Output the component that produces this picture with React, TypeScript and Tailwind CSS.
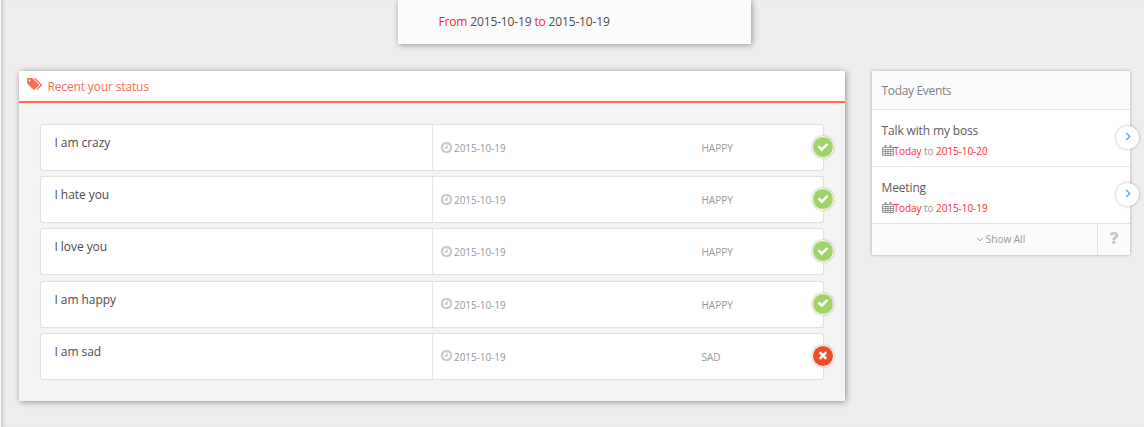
import type { ReactNode } from "react";

type IconProps = { className: string };

function TagsIcon({ className }: IconProps) {
  return (
    <svg viewBox="0 0 1920 1792" fill="currentColor" className={className}>
      <path d="M448 448q0-53-37.500-90.500t-90.500-37.500-90.500 37.500-37.500 90.500 37.500 90.500 90.500 37.500 90.500-37.500 37.500-90.500zm1067 576q0 53-37 90l-491 492q-39 37-91 37-53 0-90-37l-715-716q-38-37-64.500-101t-26.500-117v-416q0-52 38-90t90-38h416q53 0 117 26.500t102 64.500l715 714q37 39 37 91zm384 0q0 53-37 90l-491 492q-39 37-91 37-36 0-59-14t-53-45l470-470q37-37 37-90 0-52-37-91l-715-714q-38-38-102-64.500t-117-26.500h224q53 0 117 26.500t102 64.500l715 714q37 39 37 91z" />
    </svg>
  );
}

function ClockIcon({ className }: IconProps) {
  return (
    <svg viewBox="0 128 1536 1536" fill="currentColor" stroke="currentColor" strokeWidth="50" className={className}>
      <path d="M896 544v448q0 14-9 23t-23 9h-320q-14 0-23-9t-9-23v-64q0-14 9-23t23-9h224v-352q0-14 9-23t23-9h64q14 0 23 9t9 23zm416 352q0-148-73-273t-198-198-273-73-273 73-198 198-73 273 73 273 198 198 273 73 273-73 198-198 73-273zm224 0q0 209-103 385.500t-279.500 279.500-385.500 103-385.500-103-279.500-279.500-103-385.500 103-385.500 279.500-279.500 385.500-103 385.500 103 279.500 279.500 103 385.500z" />
    </svg>
  );
}

function CheckIcon({ className }: IconProps) {
  return (
    <svg viewBox="0 0 1792 1792" fill="currentColor" className={className}>
      <path d="M1671 566q0 40-28 68l-724 724-136 136q-28 28-68 28t-68-28l-136-136-362-362q-28-28-28-68t28-68l136-136q28-28 68-28t68 28l294 295 656-657q28-28 68-28t68 28l136 136q28 28 28 68z" />
    </svg>
  );
}

function TimesIcon({ className }: IconProps) {
  return (
    <svg viewBox="0 0 1792 1792" fill="currentColor" className={className}>
      <path d="M1490 1322q0 40-28 68l-136 136q-28 28-68 28t-68-28l-294-294-294 294q-28 28-68 28t-68-28l-136-136q-28-28-28-68t28-68l294-294-294-294q-28-28-28-68t28-68l136-136q28-28 68-28t68 28l294 294 294-294q28-28 68-28t68 28l136 136q28 28 28 68t-28 68l-294 294 294 294q28 28 28 68z" />
    </svg>
  );
}

function QuestionIcon({ className }: IconProps) {
  return (
    <svg viewBox="180 256 860 1240" fill="currentColor" className={className}>
      <path d="M704 1216v240q0 16-12 28t-28 12h-240q-16 0-28-12t-12-28v-240q0-16 12-28t28-12h240q16 0 28 12t12 28zm316-600q0 54-15.500 101t-35 76.500-55 59.500-57.500 43.500-61 35.500q-41 23-68.500 65t-27.500 67q0 17-12 32.500t-28 15.500h-240q-15 0-25.500-18.500t-10.500-37.500v-45q0-83 65-156.500t143-108.500q59-27 84-56t25-76q0-42-46.500-74t-107.500-32q-65 0-108 29-35 25-107 115-13 16-31 16-12 0-25-8l-164-125q-13-10-15.500-25t5.500-28q160-266 464-266 80 0 161 31t146 83 106 127.500 41 158.500z" />
    </svg>
  );
}

function CalendarIcon({ className }: IconProps) {
  return (
    <svg viewBox="0 0 12 11" fill="none" stroke="currentColor" className={className}>
      <path d="M.5 2.500h11v8H.5zM.5 4.500h11M.5 6.500h11M.5 8.500h11M3.500 4v6.500M6 4v6.500M8.500 4v6.500" />
      <path d="M3.500 0v3M8.500 0v3" strokeWidth="2" />
    </svg>
  );
}

function Chevron({ className }: IconProps) {
  return (
    <svg viewBox="0 0 6 10" fill="none" stroke="currentColor" strokeWidth="1.500" className={className}>
      <path d="M1 1l4 4-4 4" />
    </svg>
  );
}

const statuses = [
  { text: "I am crazy", mood: "HAPPY" },
  { text: "I hate you", mood: "HAPPY" },
  { text: "I love you", mood: "HAPPY" },
  { text: "I am happy", mood: "HAPPY" },
  { text: "I am sad", mood: "SAD" },
];

const events = [
  { title: "Talk with my boss", until: "2015-10-20" },
  { title: "Meeting", until: "2015-10-19" },
];

function Red({ children }: { children: ReactNode }) {
  return <span className="text-[#ff1f35]">{children}</span>;
}

function StatusRow({ text, mood }: { text: string; mood: string }) {
  const happy = mood === "HAPPY";
  return (
    <li className="relative flex h-[47px] rounded-[3px] border border-[#e2e2e2] bg-white shadow-[0_0_1px_rgba(0,0,0,0.12)]">
      <div className="w-[392px] border-r border-[#e5e5e5] pt-[9px] pl-[13.500px] text-[12px] leading-[18px] tracking-[-0.06px] text-[#4c4c4c]">{text}</div>
      <div className="flex w-[260px] items-center pt-[2px] pl-2 text-[10px] tracking-[-0.06px] text-[#999]">
        <ClockIcon className="mr-[2px] mb-[3px] size-[11px] text-[#c4c4c4]" />
        2015-10-19
      </div>
      <div className="flex items-center pt-[2px] pl-[8.500px] text-[10px] text-[#999]">{mood}</div>
      <span
        className={`absolute top-[11px] -right-[11px] flex size-[22px] items-center justify-center rounded-full border border-white text-white shadow-[0_0_2px_rgba(0,0,0,0.35)] ${happy ? "bg-[#a0d468]" : "bg-[#ed4e2a]"}`}
      >
        {happy ? <CheckIcon className="mb-px size-[12px]" /> : <TimesIcon className="mb-px size-[12px]" />}
      </span>
    </li>
  );
}

export default function App() {
  return (
    <div className="h-[427px] w-[1144px] overflow-hidden bg-[#ededed] font-['Open_Sans',sans-serif]">
      <div className="flex h-full flex-col border-l border-[#fafafa] shadow-[inset_4px_0_4px_-3px_rgba(0,0,0,0.22)]">
        <section className="ml-[397px] h-[44px] w-[353px] shrink-0 bg-[#fbfbfb] pt-[13px] pl-[40.500px] text-[12px] leading-[18px] tracking-[-0.15px] text-[#4c4c4c] shadow-[1px_1px_6px_rgba(0,0,0,0.38)]">
          <Red>From</Red> 2015-10-19 <Red>to</Red> 2015-10-19
        </section>

        <main className="mt-[27px] ml-[18px] flex items-start gap-[27px]">
          <section className="h-[330px] w-[826px] bg-[#f4f4f4] shadow-[1px_1px_6px_rgba(0,0,0,0.4)]">
            <header className="flex h-[32px] items-start border-b-2 border-[#ff6c4f] bg-white pl-[8px] text-[12px] text-[#ff6c4f]">
              <TagsIcon className="mt-[6px] h-[14px] w-[15px]" />
              <h2 className="pt-[7px] pl-[5.500px] leading-[18px] tracking-[-0.15px]">Recent your status</h2>
            </header>
            <ul className="flex flex-col gap-[5.200px] pt-[21px] pr-[21px] pl-[21px]">
              {statuses.map((status) => (
                <StatusRow key={status.text} {...status} />
              ))}
            </ul>
          </section>

          <section className="w-[258px] bg-white text-[#999] shadow-[0_0_3px_rgba(0,0,0,0.3)]">
            <h2 className="h-[38px] bg-[#fbfbfb] pt-[11px] pl-[9.500px] text-[12px] leading-[18px] tracking-[-0.33px] text-[#808080]">Today Events</h2>
            {events.map((event) => (
              <article key={event.title} className="relative h-[57px] border-t border-[#e2e2e2] pt-[11.500px] pl-[9.500px]">
                <h3 className="text-[12px] leading-[18px] tracking-[-0.14px] text-[#5c5c5c]">{event.title}</h3>
                <p className="mt-[3.500px] flex text-[10px] leading-[16px] tracking-[-0.06px] whitespace-pre">
                  <CalendarIcon className="mt-[2px] h-[11px] w-[12px]" />
                  <Red>Today</Red> to <Red>{event.until}</Red>
                </p>
                <button className="absolute top-[16px] -right-[9px] flex size-[23px] items-center justify-center rounded-full bg-white text-[#3db7e4] shadow-[0_0_3px_rgba(0,0,0,0.3)]">
                  <Chevron className="mb-[3px] ml-px h-[9px] w-[6px]" />
                </button>
              </article>
            ))}
            <footer className="flex h-[32px] border-t border-[#e2e2e2] bg-[#fbfbfb]">
              <button className="flex w-[225px] items-center justify-center pl-[34px] text-[10px]">
                <Chevron className="mr-[4px] h-[7px] w-[4px] rotate-90" />
                Show All
              </button>
              <button className="flex w-[33px] items-start justify-center border-l border-[#e2e2e2] pt-[8px] text-[#c8c8c8]">
                <QuestionIcon className="h-[12px] w-[9px]" />
              </button>
            </footer>
          </section>
        </main>
      </div>
    </div>
  );
}
